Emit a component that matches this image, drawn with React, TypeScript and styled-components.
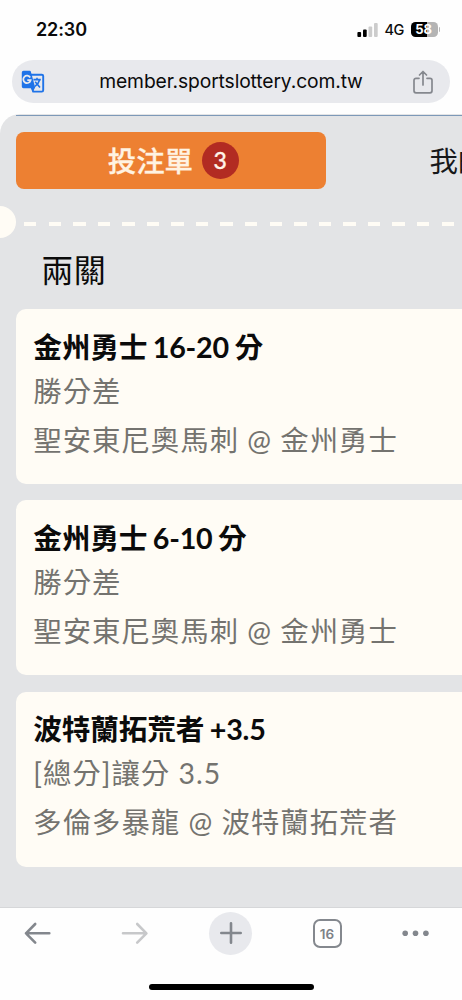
import React from 'react';
import styled, { createGlobalStyle } from 'styled-components';

const Global = createGlobalStyle`
  * { box-sizing: border-box; }
  html, body { margin: 0; background: #fefefe; }
  body { width: 462px; height: 1000px; overflow: hidden; font-family: Lato, "Noto Sans CJK TC", sans-serif; color: #0b0b0b; }
  svg { display: block; flex: none; }
`;

const Screen = styled.div`
  width: 462px; height: 1000px; display: flex; flex-direction: column; overflow: hidden; background: #fefefe;
`;
const StatusBar = styled.div`
  height: 60px; flex: none; display: flex; justify-content: space-between; align-items: center;
  padding: 0 22px 0.4px 36px; font-family: Inter, sans-serif;
`;
const Clock = styled.span`font-size: 18px; font-weight: 600; letter-spacing: -0.1px; line-height: 22px;`;
const StatusIcons = styled.div`display: flex; align-items: center; height: 22px;`;
const Network = styled.span`font-size: 14.5px; font-weight: 500; margin: 0 6px 0 6.5px; width: 20px; letter-spacing: -0.4px; line-height: 18px; white-space: nowrap;`;
const Battery = styled.div`
  width: 27px; height: 15px; border-radius: 4.5px; color: #fff; font-size: 13px; font-weight: 700;
  line-height: 15px; text-align: center; letter-spacing: -0.1px; padding-right: 1px;
  background: linear-gradient(90deg, #000 0 15.5px, #b4b4b4 15.5px);
`;
const BatteryTip = styled.div`width: 1.5px; height: 5px; margin-left: 1px; border-radius: 0 2px 2px 0; background: #b8b8b8;`;
const AddressBar = styled.div`
  height: 42.6px; flex: none; margin: 0.3px 12px 0; border-radius: 22px; background: #e8e9ed; display: flex; align-items: center;
  justify-content: space-between; padding: 0 17.5px 0 9px; font-family: Inter, sans-serif;
`;
const Url = styled.span`font-size: 19.3px; letter-spacing: -0.13px; line-height: 24px; white-space: nowrap; width: 266px; margin: 0 0 1px 7px;`;
const Page = styled.main`
  position: relative; height: 793px; flex: none; margin-top: 11.1px; border-radius: 20px 0 0 0; background: #e3e4e6; overflow: hidden;
  display: flex; flex-direction: column;
`;
const Rule = styled.div`height: 1px; flex: none; margin: 0.6px 0 0 16px; background: #7d99b8;`;
const Tabs = styled.div`display: flex; align-items: center; margin: 16.4px 0 0 16.3px; width: 620px; height: 57.4px; flex: none;`;
const ActiveTab = styled.div`
  width: 309.7px; height: 57.4px; border-radius: 8px; background: #ed8032; color: #fff3e2; display: flex; align-items: center;
  padding-left: 91.5px; font-size: 28.4px; font-weight: 500; line-height: 40px; white-space: nowrap;
  -webkit-text-stroke: 0.3px #fff3e2;
`;
const Count = styled.span`
  width: 37px; height: 37px; border-radius: 50%; margin-left: 8.8px; background: #b22b22; color: #fff4ea; font-size: 23px; font-weight: 500;
  line-height: 37px; text-align: center;
`;
const OtherTab = styled.div`margin-left: 103.4px; font-size: 28.4px; line-height: 40px; color: #17181a;`;
const Perforation = styled.div`height: 32px; flex: none; display: flex; align-items: center; margin-top: 16.6px;`;
const Notch = styled.div`width: 16.3px; height: 32.4px; border-radius: 0 17px 17px 0; background: #fffcf5;`;
const Dashes = styled.div`
  flex: 1; height: 4px; margin: 4px 7px 0 8.1px;
  background: repeating-linear-gradient(90deg, #fffcf5 0 12.4px, transparent 12.4px 24.56px);
`;
const Heading = styled.h2`margin: 8px 0 0 41.3px; height: 48px; flex: none; font-size: 32px; font-weight: 400; letter-spacing: 0.4px; line-height: 48px;`;
const CardList = styled.div`display: flex; flex-direction: column; gap: 16.5px; margin: 15.2px 0 0 16.3px; width: 600px;`;
const Card = styled.article`height: 174.8px; flex: none; border-radius: 10px; background: #fffcf5; padding: 16.4px 0 0 17px; white-space: nowrap;`;
const Pick = styled.div`font-size: 28.7px; font-weight: 700; letter-spacing: -0.2px; word-spacing: -1.3px; line-height: 42px; height: 42px;`;
const Detail = styled.div<{ $gap?: number }>`
  margin-top: ${p => p.$gap ?? 0}px; height: 42px; line-height: 42px; font-size: 28.4px; letter-spacing: 1px; color: #74736f;
`;
const BottomBar = styled.nav`
  flex: 1; border-top: 1px solid #d6d7d9; display: flex; flex-direction: column; align-items: center; background: #fefefe;
`;
const Controls = styled.div`
  width: 100%; height: 51px; display: flex; align-items: center; padding-left: 22px;
`;
const AddButton = styled.div`
  width: 43px; height: 43px; margin-left: 60.5px; border-radius: 50%; background: #e8e9ed; display: grid; place-items: center;
`;
const TabCount = styled.div`
  width: 29px; height: 29px; margin: 0 60px 0 60.5px; border: 2px solid #84888e; border-radius: 7px; color: #7d8187; font: 600 13.5px/26px Inter, sans-serif; text-align: center;
`;
const HomeIndicator = styled.div`width: 165px; height: 6px; border-radius: 3px; background: #000; margin-top: 25.5px;`;

const bets = [
  { pick: '金州勇士 16-20 分', type: '勝分差', game: '聖安東尼奧馬刺 @ 金州勇士' },
  { pick: '金州勇士 6-10 分', type: '勝分差', game: '聖安東尼奧馬刺 @ 金州勇士' },
  { pick: '波特蘭拓荒者 +3.5', type: '[總分]讓分 3.5', game: '多倫多暴龍 @ 波特蘭拓荒者' },
];

const Signal = () => (
  <svg width="21" height="14" viewBox="0 0 21 14">
    <rect x="0.4" y="9" width="3.7" height="5" rx="1" fill="#000" />
    <rect x="6" y="6.5" width="3.7" height="7.5" rx="1" fill="#000" />
    <rect x="11.5" y="3.5" width="3.7" height="10.5" rx="1" fill="#ccc" />
    <rect x="17" y="0" width="3.7" height="14" rx="1" fill="#ccc" />
  </svg>
);

const TranslateIcon = () => (
  <svg width="24" height="24" viewBox="0 0 24 24" fill="none">
    <path d="M10 4.7H20.8a1.4 1.4 0 0 1 1.4 1.4v14.1a1.4 1.4 0 0 1-1.4 1.4H12.2L10.5 17" stroke="#1f73e8" strokeWidth="1.9" />
    <path d="M2.5.7H8.8a1 1 0 0 1 1 .8L14.2 17.6 11.6 22 10.5 18.3H2.5A1.7 1.7 0 0 1 .8 16.6V2.4A1.7 1.7 0 0 1 2.5.7Z" fill="#1f73e8" />
    <path d="M9.2 7.5A3.7 3.7 0 1 0 9.6 10.2H6.3" stroke="#e8e9ed" strokeWidth="1.8" />
    <path d="M12.4 9.6h7.4M16 7.8V9.8M18.7 9.8c-.8 3-2.5 4.8-4.7 6.5M14.2 11.8l4.8 5.6" stroke="#1f73e8" strokeWidth="1.6" />
  </svg>
);

const ShareIcon = () => (
  <svg width="20" height="24" viewBox="0 0 20 24" fill="none" stroke="#85888e" strokeWidth="1.7" strokeLinecap="round" strokeLinejoin="round">
    <path d="M6 8.3H3A2 2 0 0 0 1 10.3V20.8A2 2 0 0 0 3 22.8H17A2 2 0 0 0 19 20.8V10.3A2 2 0 0 0 17 8.3H14M10 15V1.6M6.5 5 10 1.5l3.5 3.5" />
  </svg>
);

const ArrowSvg = styled.svg<{ $forward?: boolean }>`margin-left: ${p => (p.$forward ? 66.5 : 0)}px;`;

const Arrow = ({ forward = false }: { forward?: boolean }) => (
  <ArrowSvg $forward={forward} width="30" height="24" viewBox="0 0 30 24" fill="none" stroke={forward ? '#c7c8ca' : '#83878d'} strokeWidth="2.6" strokeLinecap="round" strokeLinejoin="round">
    {forward ? <path d="M4 12.3H27M18.2 3 27.4 12.3l-9.2 9.3" /> : <path d="M27.3 12.3H4M13.2 3 4 12.3l9.2 9.3" />}
  </ArrowSvg>
);

export default function App() {
  return (
    <Screen>
      <Global />
      <StatusBar>
        <Clock>22:30</Clock>
        <StatusIcons>
          <Signal />
          <Network>4G</Network>
          <Battery>58</Battery>
          <BatteryTip />
        </StatusIcons>
      </StatusBar>
      <AddressBar>
        <TranslateIcon />
        <Url>member.sportslottery.com.tw</Url>
        <ShareIcon />
      </AddressBar>
      <Page>
        <Rule />
        <Tabs>
          <ActiveTab>投注單<Count>3</Count></ActiveTab>
          <OtherTab>我的</OtherTab>
        </Tabs>
        <Perforation><Notch /><Dashes /></Perforation>
        <Heading>兩關</Heading>
        <CardList>
          {bets.map(b => (
            <Card key={b.pick}>
              <Pick>{b.pick}</Pick>
              <Detail $gap={2}>{b.type}</Detail>
              <Detail $gap={7}>{b.game}</Detail>
            </Card>
          ))}
        </CardList>
      </Page>
      <BottomBar>
        <Controls>
          <Arrow />
          <Arrow forward />
          <AddButton>
            <svg width="24" height="24" viewBox="0 0 24 24" stroke="#83878d" strokeWidth="2.6" strokeLinecap="round"><path d="M12 2.3v19.4M2.3 12h19.4" /></svg>
          </AddButton>
          <TabCount>16</TabCount>
          <svg width="28" height="8" viewBox="0 0 28 8" fill="#83878d"><circle cx="3.2" cy="4.3" r="2.8" /><circle cx="13.5" cy="4.3" r="2.8" /><circle cx="23.9" cy="4.3" r="2.8" /></svg>
        </Controls>
        <HomeIndicator />
      </BottomBar>
    </Screen>
  );
}
